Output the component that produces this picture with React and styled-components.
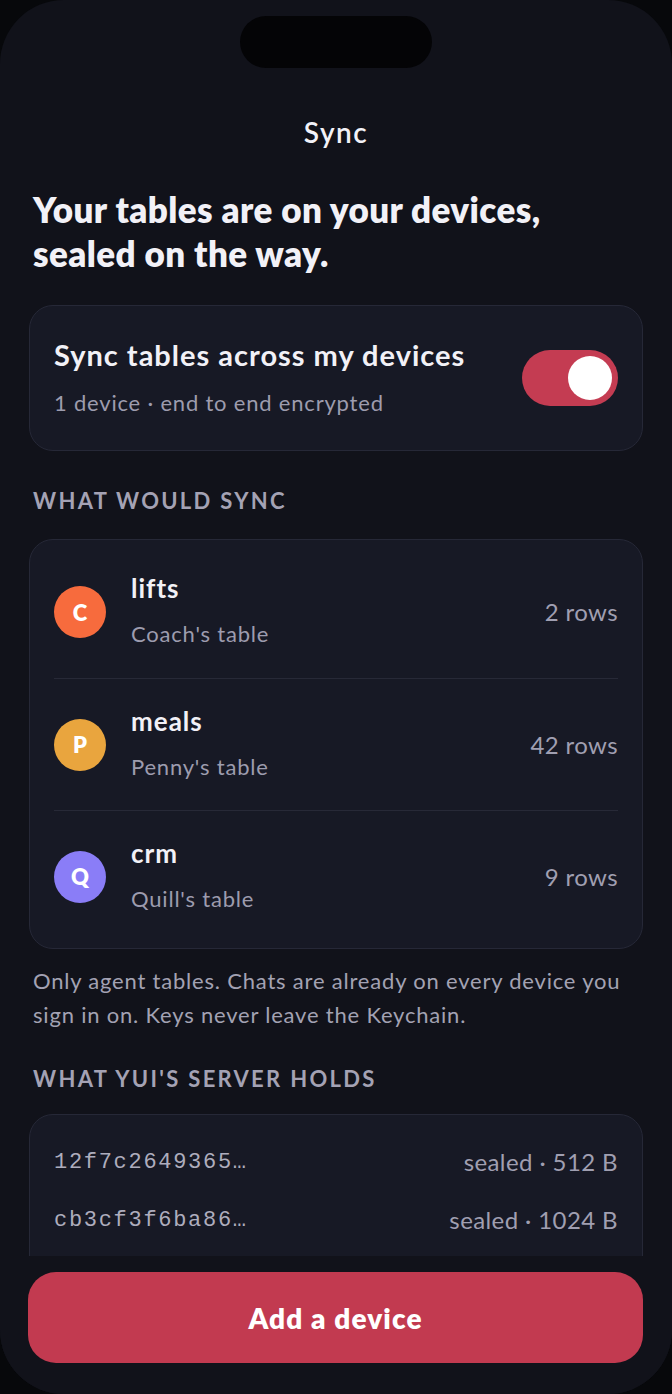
import React from "react";
import styled, { createGlobalStyle } from "styled-components";

const GlobalStyle = createGlobalStyle`
  html, body {
    margin: 0;
    padding: 0;
    background: #07080b;
  }
  * { box-sizing: border-box; }
`;

const Phone = styled.div`
  width: 672px;
  height: 1394px;
  border-radius: 64px;
  background: #11121a;
  display: flex;
  flex-direction: column;
  overflow: hidden;
  font-family: Lato, "Noto Sans", sans-serif;
  color: #f2f1f7;
`;

const StatusArea = styled.div`
  flex: none;
  display: flex;
  justify-content: center;
  padding-top: 16px;
`;

const Island = styled.div`
  width: 192px;
  height: 52px;
  border-radius: 26px;
  background: #040406;
`;

const Scroll = styled.div`
  flex: 1;
  min-height: 0;
  overflow: hidden;
  padding: 0 29px;
  display: flex;
  flex-direction: column;
`;

const NavTitle = styled.div`
  margin-top: 48px;
  text-align: center;
  font-size: 28px;
  line-height: 32px;
  font-weight: 600;
  letter-spacing: 1.5px;
`;

const Heading = styled.h1`
  margin: 39px 0 0;
  padding-left: 4px;
  font-size: 35px;
  line-height: 44px;
  font-weight: 800;
  letter-spacing: 0.4px;
`;

const Card = styled.div`
  flex: none;
  margin-top: ${(p) => p.$mt}px;
  background: #171925;
  border: 1px solid #262837;
  border-radius: 24px;
  padding: ${(p) => p.$pad};
`;

const ToggleCard = styled(Card)`
  display: flex;
  align-items: center;
  justify-content: space-between;
`;

const TextStack = styled.div`
  display: flex;
  flex-direction: column;
  gap: 18px;
`;

const CardTitle = styled.div`
  font-size: 29px;
  line-height: 32px;
  font-weight: 700;
  letter-spacing: 1px;
`;

const SubText = styled.div`
  font-size: 22px;
  line-height: 28px;
  letter-spacing: 0.8px;
  color: #9d9cae;
`;

const Toggle = styled.div`
  flex: none;
  width: 96px;
  height: 56px;
  border-radius: 28px;
  background: #c43c52;
  display: flex;
  align-items: center;
  justify-content: ${(p) => (p.$on ? "flex-end" : "flex-start")};
  padding: 0 6px;
`;

const Knob = styled.div`
  width: 44px;
  height: 44px;
  border-radius: 50%;
  background: #ffffff;
`;

const SectionLabel = styled.div`
  margin-top: ${(p) => p.$mt}px;
  padding-left: 4px;
  font-size: 22px;
  line-height: 24px;
  font-weight: 700;
  letter-spacing: 2.3px;
  text-transform: uppercase;
  color: #a4a2b4;
`;

const TableRow = styled.div`
  height: 132px;
  display: flex;
  align-items: center;
  gap: 25px;
  & + & {
    border-top: 1px solid #272937;
  }
`;

const Avatar = styled.div`
  flex: none;
  width: 52px;
  height: 52px;
  border-radius: 50%;
  background: ${(p) => p.$color};
  display: flex;
  align-items: center;
  justify-content: center;
  color: #ffffff;
  font-size: 22px;
  font-weight: 800;
`;

const RowText = styled(TextStack)`
  flex: 1;
  gap: 17px;
  margin-top: -3px;
`;

const RowName = styled.div`
  font-size: 26px;
  line-height: 30px;
  font-weight: 700;
  letter-spacing: 1px;
`;

const RowMeta = styled.div`
  font-size: 24px;
  line-height: 28px;
  letter-spacing: 0.4px;
  color: #a09fb1;
`;

const Note = styled.p`
  margin: 15px 0 0;
  padding-left: 4px;
  font-size: 22px;
  line-height: 34px;
  letter-spacing: 0.8px;
  color: #a3a2b3;
`;

const BlobRow = styled.div`
  height: 58px;
  display: flex;
  align-items: center;
  justify-content: space-between;
`;

const Hash = styled.span`
  font-family: "Liberation Mono", "DejaVu Sans Mono", monospace;
  font-size: 22px;
  letter-spacing: 1.7px;
  color: #aeadbd;
`;

const Footer = styled.div`
  flex: none;
  padding: 16px 29px 31px 28px;
  background: #11121a;
`;

const PrimaryButton = styled.button`
  width: 100%;
  height: 91px;
  border: none;
  border-radius: 28px;
  background: #c23a50;
  color: #ffffff;
  font-family: Lato, "Noto Sans", sans-serif;
  font-size: 28px;
  font-weight: 800;
  letter-spacing: 1.1px;
  cursor: pointer;
`;

const tables = [
  { letter: "C", color: "#f76b3d", name: "lifts", owner: "Coach's table", rows: "2 rows" },
  { letter: "P", color: "#e9a53e", name: "meals", owner: "Penny's table", rows: "42 rows" },
  { letter: "Q", color: "#8a7df7", name: "crm", owner: "Quill's table", rows: "9 rows" },
];

const blobs = [
  { id: "12f7c2649365…", size: "sealed · 512 B" },
  { id: "cb3cf3f6ba86…", size: "sealed · 1024 B" },
];

export default function App() {
  return (
    <>
      <GlobalStyle />
      <Phone>
        <StatusArea>
          <Island />
        </StatusArea>
        <Scroll>
          <NavTitle>Sync</NavTitle>
          <Heading>
            Your tables are on your devices,
            <br />
            sealed on the way.
          </Heading>

          <ToggleCard $mt={30} $pad="33px 24px">
            <TextStack>
              <CardTitle>Sync tables across my devices</CardTitle>
              <SubText>1 device · end to end encrypted</SubText>
            </TextStack>
            <Toggle $on>
              <Knob />
            </Toggle>
          </ToggleCard>

          <SectionLabel $mt={38}>What would sync</SectionLabel>
          <Card $mt={26} $pad="6px 24px">
            {tables.map((t) => (
              <TableRow key={t.name}>
                <Avatar $color={t.color}>{t.letter}</Avatar>
                <RowText>
                  <RowName>{t.name}</RowName>
                  <SubText>{t.owner}</SubText>
                </RowText>
                <RowMeta>{t.rows}</RowMeta>
              </TableRow>
            ))}
          </Card>

          <Note>
            Only agent tables. Chats are already on every device you sign in on. Keys never leave the Keychain.
          </Note>

          <SectionLabel $mt={35}>What Yui's server holds</SectionLabel>
          <Card $mt={23} $pad="18px 24px 40px">
            {blobs.map((b) => (
              <BlobRow key={b.id}>
                <Hash>{b.id}</Hash>
                <RowMeta>{b.size}</RowMeta>
              </BlobRow>
            ))}
          </Card>
        </Scroll>
        <Footer>
          <PrimaryButton>Add a device</PrimaryButton>
        </Footer>
      </Phone>
    </>
  );
}
